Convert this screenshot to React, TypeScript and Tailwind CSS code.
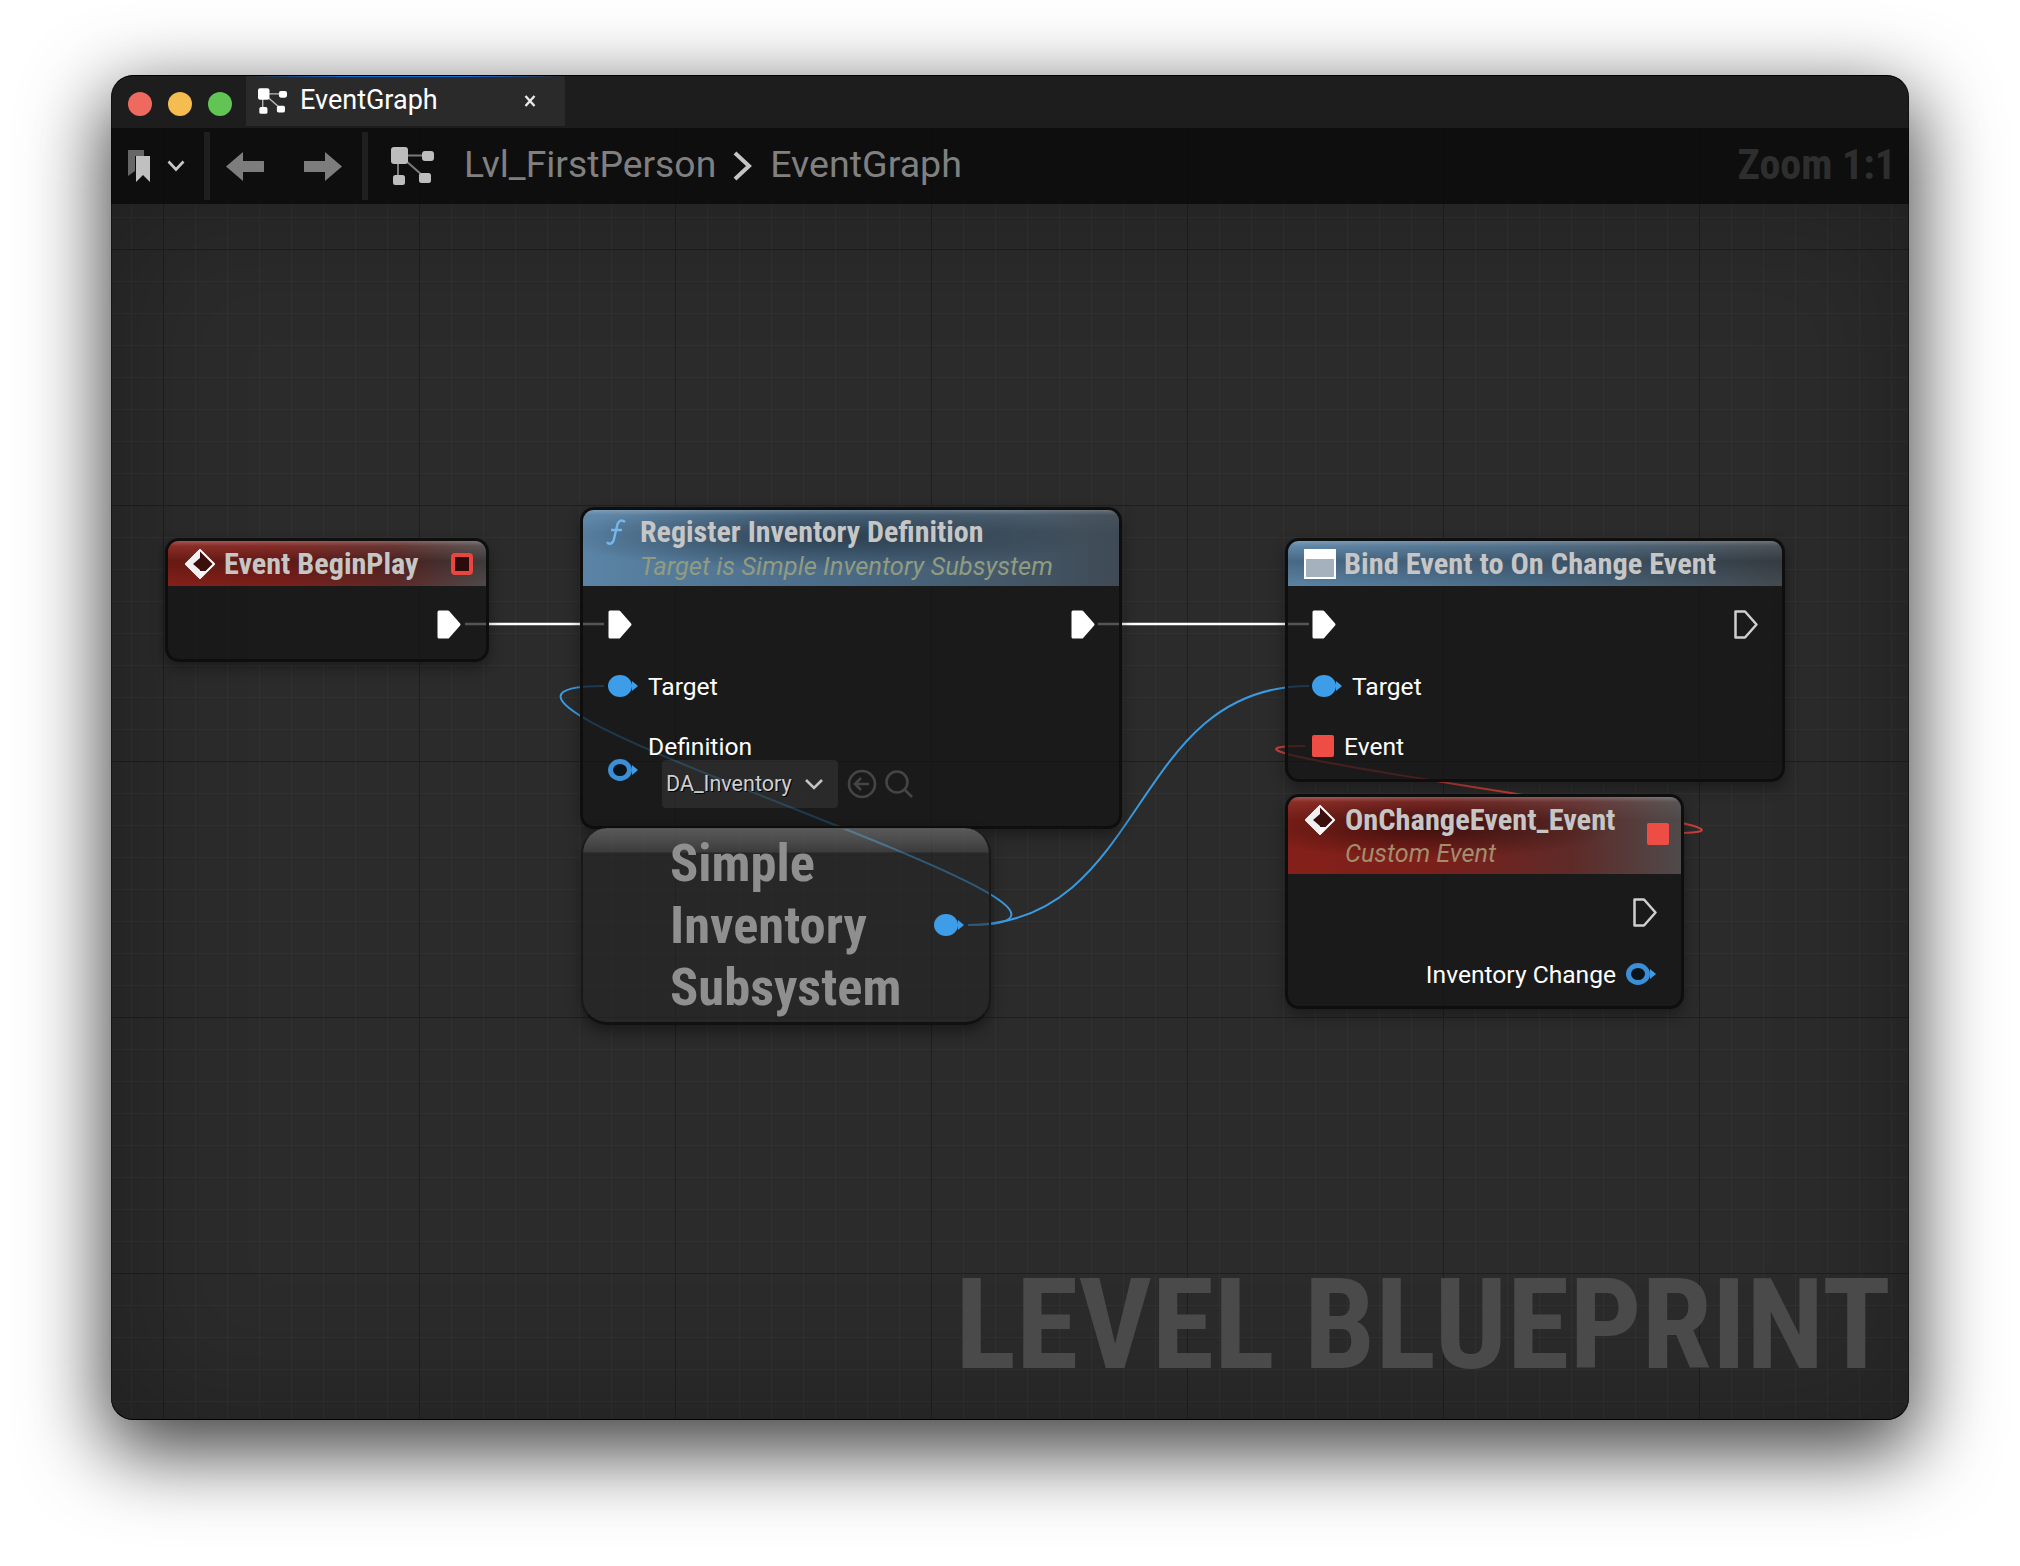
import React from "react";

const cond = "font-['Roboto_Condensed','Roboto',sans-serif] font-bold [font-stretch:75%]";

function Exec({ filled = true }: { filled?: boolean }) {
  return (
    <svg width="24" height="29" viewBox="0 0 24 29" className="shrink-0">
      <path
        d={filled ? "M2 2 H11 L22 14.5 L11 27 H2 Z" : "M1.5 1.5 H11 L22.5 14.5 L11 27.5 H1.5 Z"}
        fill={filled ? "#ffffff" : "none"}
        stroke={filled ? "#ffffff" : "#cfcfcf"}
        strokeWidth={filled ? 3 : 2.5}
        strokeLinejoin="round"
      />
    </svg>
  );
}

function DataPin({ ring = false }: { ring?: boolean }) {
  return (
    <svg width="30" height="22" viewBox="0 0 30 22" className="shrink-0">
      <path d="M24 6 L30 11 L24 16 Z" fill="#3d9de8" />
      {ring ? (
        <ellipse cx="12" cy="11" rx="9.5" ry="8.5" fill="#0c141a" stroke="#3a8fd6" strokeWidth="5" />
      ) : (
        <ellipse cx="12" cy="11" rx="12" ry="11" fill="#3d9de8" />
      )}
    </svg>
  );
}

function Diamond() {
  return (
    <svg width="30" height="30" viewBox="0 0 30 30" className="shrink-0">
      <path d="M15 1 L29 15 L15 29 L1 15 Z" fill="#3a0f0c" stroke="#ffffff" strokeWidth="2" strokeLinejoin="miter" />
      <path d="M15 1 L1 15 L15 29 L15 21 L8 15 L15 9 Z" fill="#f0f0f0" />
      <path d="M15 22 L22 22 L15 28 Z" fill="#ffffff" />
    </svg>
  );
}

function GraphIcon({ w, h, color, line }: { w: number; h: number; color: string; line: string }) {
  return (
    <svg width={w} height={h} viewBox="0 0 43 38" className="shrink-0">
      <path d="M15 8.5 H33 M7 15 V30 M14 13 L31 28" stroke={line} strokeWidth="2" fill="none" />
      <rect x="0" y="0" width="17" height="17" rx="3" fill={color} />
      <rect x="31" y="4" width="12" height="10" rx="3" fill={color} />
      <rect x="2" y="28" width="12" height="10" rx="2.5" fill={color} />
      <rect x="28" y="26" width="12" height="10" rx="2.5" fill={color} />
    </svg>
  );
}

function TrafficLight({ color }: { color: string }) {
  return <div className={color + " w-[24px] h-[24px] rounded-full"} />;
}

const shell = "absolute rounded-[14px] border-[3px] border-[#0e0e0e] bg-[rgba(20,20,20,0.72)] shadow-[0_6px_14px_rgba(0,0,0,0.35)]";
const redHead =
  "rounded-t-[11px] bg-[linear-gradient(180deg,rgba(255,255,255,0.25)_0px,rgba(255,255,255,0.06)_5px,rgba(0,0,0,0.22)_45%,rgba(0,0,0,0)_100%),linear-gradient(90deg,#842019_0%,#7c1f1a_35%,#5e2a28_72%,#4f4a4a_100%)]";
const redHeadTall =
  "rounded-t-[11px] bg-[radial-gradient(ellipse_48%_42%_at_36%_38%,rgba(0,0,0,0.5),rgba(0,0,0,0)),linear-gradient(180deg,rgba(255,255,255,0.25)_0px,rgba(255,255,255,0.06)_5px,rgba(0,0,0,0)_30%),linear-gradient(90deg,#842019_0%,#7c1f1a_35%,#5e2a28_72%,#4f4a4a_100%)]";
const blueHead =
  "rounded-t-[11px] bg-[linear-gradient(180deg,rgba(255,255,255,0.22)_0px,rgba(255,255,255,0.04)_5px,rgba(0,0,0,0.2)_45%,rgba(0,0,0,0)_100%),linear-gradient(90deg,#5a83a5_0%,#4a6a85_50%,#434a50_100%)]";
const blueHeadTall =
  "rounded-t-[11px] bg-[radial-gradient(ellipse_50%_45%_at_45%_35%,rgba(0,0,0,0.42),rgba(0,0,0,0)),linear-gradient(180deg,rgba(255,255,255,0.22)_0px,rgba(255,255,255,0.04)_5px,rgba(0,0,0,0)_30%),linear-gradient(90deg,#5a83a5_0%,#4a6a85_50%,#3f4a54_100%)]";

function Label({ children, className = "" }: { children: React.ReactNode; className?: string }) {
  return <span className={"text-[24.6px] leading-[28px] text-white whitespace-nowrap " + className}>{children}</span>;
}

export default function App() {
  return (
    <div className="w-[2020px] h-[1566px] bg-white pt-[75px] pl-[111px] font-['Roboto',sans-serif] overflow-hidden">
      <div className="w-[1798px] h-[1345px] rounded-[22px] overflow-hidden flex flex-col bg-[#1d1d1d] shadow-[0_26px_80px_6px_rgba(0,0,0,0.75)] relative">
        {/* title bar */}
        <div className="h-[53px] shrink-0 flex items-start pl-[17px]">
          <div className="flex items-center gap-[16px] mt-[17px]">
            <TrafficLight color="bg-[#ee6a5f]" />
            <TrafficLight color="bg-[#f5bd4f]" />
            <TrafficLight color="bg-[#61c454]" />
          </div>
          <div className="ml-[14px] w-[319px] h-[51px] bg-[#2a2a2a] rounded-t-[4px] flex items-center pl-[12px] relative">
            <div className="absolute left-0 right-0 top-0 h-[2px] bg-[linear-gradient(90deg,rgba(30,100,210,0),#1e66d0_30%,#1e66d0_70%,rgba(30,100,210,0))]" />
            <GraphIcon w={29} h={26} color="#ffffff" line="#bbbbbb" />
            <span className="ml-[13px] text-[27px] text-white leading-none">EventGraph</span>
            <svg width="12" height="14" viewBox="0 0 12 14" className="ml-auto mr-[29px]">
              <path d="M1.5 2 L10.5 12 M10.5 2 L1.5 12" stroke="#e8e8e8" strokeWidth="2.4" />
            </svg>
          </div>
        </div>

        {/* graph area */}
        <div className="flex-1 flex flex-col bg-[#2b2b2b] bg-[linear-gradient(#1f1f1f_1px,transparent_1px),linear-gradient(90deg,#1f1f1f_1px,transparent_1px),linear-gradient(#313131_1px,transparent_1px),linear-gradient(90deg,#313131_1px,transparent_1px)] bg-[size:256px_256px,256px_256px,32px_32px,32px_32px] bg-[position:0_121px,52px_0,0_25px,20px_0]">
          {/* toolbar */}
          <div className="h-[76px] shrink-0 bg-[rgba(8,8,8,0.8)] flex items-center pl-[17px] relative">
            <svg width="22" height="32" viewBox="0 0 22 32" className="shrink-0">
              <path d="M0 0 H16 V6 H7 V21 L0 26 Z" fill="#666666" />
              <path d="M8 6 H22 V32 L15 25 L8 32 Z" fill="#c0c0c0" />
            </svg>
            <svg width="18" height="12" viewBox="0 0 18 12" className="ml-[17px] shrink-0">
              <path d="M1.5 1.5 L9 9.5 L16.5 1.5" stroke="#c8c8c8" strokeWidth="2.6" fill="none" />
            </svg>
            <div className="ml-[19px] w-[6px] h-[68px] bg-[#1f1f1f]" />
            <svg width="38" height="29" viewBox="0 0 38 29" className="ml-[16px] shrink-0">
              <path d="M0 14.5 L17 0 V9 H38 V20 H17 V29 Z" fill="#7d7d7d" />
            </svg>
            <svg width="38" height="29" viewBox="0 0 38 29" className="ml-[40px] shrink-0">
              <path d="M38 14.5 L21 0 V9 H0 V20 H21 V29 Z" fill="#7d7d7d" />
            </svg>
            <div className="ml-[20px] w-[6px] h-[68px] bg-[#1f1f1f]" />
            <div className="ml-[23px]">
              <GraphIcon w={43} h={38} color="#bdbdbd" line="#7a7a7a" />
            </div>
            <span className="ml-[30px] -mt-[3px] text-[37.3px] text-[#808080] leading-none">Lvl_FirstPerson</span>
            <svg width="20" height="30" viewBox="0 0 20 30" className="ml-[16px] shrink-0">
              <path d="M3 2 L17 15 L3 28" stroke="#c4c4c4" strokeWidth="4" fill="none" />
            </svg>
            <span className="ml-[18px] -mt-[3px] text-[37.6px] text-[#808080] leading-none">EventGraph</span>
            <span className={cond + " ml-auto mr-[13px] -mt-[3px] text-[42px] leading-none text-[#2e2e2e]"}>Zoom 1:1</span>
          </div>

          {/* canvas */}
          <div className="flex-1 relative shadow-[inset_0_0_130px_rgba(0,0,0,0.28)]">
            <svg width="1798" height="1216" viewBox="111 204 1798 1216" className="absolute left-0 top-0" fill="none">
              <path d="M465 624 H604" stroke="#ffffff" strokeWidth="2.5" />
              <path d="M1098 624 H1309" stroke="#ffffff" strokeWidth="2.5" />
              <path d="M968 925 C1208 925 364 686 604 686" stroke="#3a9be0" strokeWidth="2" />
              <path d="M968 925 C1148 925 1129 686 1309 686" stroke="#3a9be0" strokeWidth="2" />
              <path d="M1673 833 C1853 833 1125 746 1305 746" stroke="#c8403a" strokeWidth="2" />
            </svg>

            {/* Event BeginPlay */}
            <div className={shell + " left-[54px] top-[334px] w-[324px] h-[124px]"}>
              <div className={redHead + " h-[45px] flex items-center pl-[17px] pr-[13px]"}>
                <Diamond />
                <span className={cond + " ml-[9px] mt-[2px] text-[30.2px] leading-none text-[#c6c6c6]"}>Event BeginPlay</span>
                <div className="ml-auto w-[22px] h-[22px] rounded-[4px] border-[4px] border-[#e8463f] bg-[#2b0b0b]" />
              </div>
              <div className="h-[76px] flex items-center justify-end pr-[25px]">
                <Exec />
              </div>
            </div>

            {/* Register Inventory Definition */}
            <div className={shell + " left-[469px] top-[303px] w-[542px] h-[322px]"}>
              <div className={blueHeadTall + " h-[76px] pl-[23px]"}>
                <div className="flex items-center h-[44px]">
                  <svg width="20" height="26" viewBox="0 0 20 26" className="shrink-0">
                    <path d="M19 3 C15 0 12 2 11 7 L8 20 C7 25 3 26 1 23 M5 11 H16" stroke="#74b6ee" strokeWidth="2.4" fill="none" />
                  </svg>
                  <span className={cond + " ml-[14px] text-[30px] leading-none text-[#c6c6c6]"}>Register Inventory Definition</span>
                </div>
                <div className="ml-[34px] text-[25.5px] leading-[24px] italic text-[#919b80] whitespace-nowrap">Target is Simple Inventory Subsystem</div>
              </div>
              <div className="h-[76px] flex items-center justify-between pl-[25px] pr-[24px]">
                <Exec />
                <Exec />
              </div>
              <div className="h-[48px] flex items-center pl-[25px]">
                <DataPin />
                <Label className="ml-[10px] mt-[2px]">Target</Label>
              </div>
              <div className="flex items-start pl-[25px] pt-[22px]">
                <div className="mt-[27px]">
                  <DataPin ring />
                </div>
                <div className="ml-[10px] flex flex-col">
                  <Label className="mt-[1px]">Definition</Label>
                  <div className="ml-[14px] -mt-[1px] flex items-center">
                    <div className="w-[176px] h-[48px] rounded-[4px] bg-[rgba(255,255,255,0.07)] flex items-center pl-[4px]">
                      <span className="text-[21.5px] text-[#cfcfcf] [text-shadow:1px_1px_0_#000]">DA_Inventory</span>
                      <svg width="20" height="12" viewBox="0 0 20 12" className="ml-[12px]">
                        <path d="M2 2 L10 10 L18 2" stroke="#c4c4c4" strokeWidth="2.6" fill="none" />
                      </svg>
                    </div>
                    <svg width="30" height="30" viewBox="0 0 30 30" className="ml-[9px]" fill="none" stroke="#454545" strokeWidth="2.6">
                      <circle cx="15" cy="15" r="13" />
                      <path d="M22 15 H9 M14 9 L8 15 L14 21" />
                    </svg>
                    <svg width="30" height="30" viewBox="0 0 30 30" className="ml-[7px]" fill="none" stroke="#454545" strokeWidth="2.6">
                      <circle cx="13" cy="13" r="10.5" />
                      <path d="M20.5 20.5 L28 28" />
                    </svg>
                  </div>
                </div>
              </div>
            </div>

            {/* Simple Inventory Subsystem */}
            <div className="absolute left-[470px] top-[624px] w-[410px] h-[197px] rounded-[26px] bg-[linear-gradient(180deg,rgba(130,130,130,0.6)_0px,rgba(70,70,70,0.6)_24px,rgba(36,36,36,0.55)_25px)] border-b-[3px] border-x-[2px] border-x-[#181818] border-b-[#111111] shadow-[0_6px_14px_rgba(0,0,0,0.4)] flex items-center justify-between pl-[87px] pr-[25px]">
              <div className={cond + " text-[52.5px] leading-[62px] text-[#8f8f8f]"}>
                <div>Simple</div>
                <div>Inventory</div>
                <div>Subsystem</div>
              </div>
              <DataPin />
            </div>

            {/* Bind Event */}
            <div className={shell + " left-[1174px] top-[334px] w-[500px] h-[244px]"}>
              <div className={blueHead + " h-[45px] flex items-center pl-[16px]"}>
                <div className="w-[32px] h-[30px] border-[2px] border-white border-t-[10px] bg-[#a5b1bd] shrink-0" />
                <span className={cond + " ml-[8px] mt-[2px] text-[30.4px] leading-none text-[#c6c6c6]"}>Bind Event to On Change Event</span>
              </div>
              <div className="h-[76px] flex items-center justify-between px-[24px]">
                <Exec />
                <Exec filled={false} />
              </div>
              <div className="h-[48px] flex items-center pl-[24px]">
                <DataPin />
                <Label className="ml-[10px] mt-[2px]">Target</Label>
              </div>
              <div className="h-[72px] flex items-center pl-[24px]">
                <div className="w-[22px] h-[22px] rounded-[2px] bg-[#ee4d45]" />
                <Label className="ml-[10px] mt-[2px]">Event</Label>
              </div>
            </div>

            {/* OnChangeEvent */}
            <div className={shell + " left-[1174px] top-[590px] w-[399px] h-[215px]"}>
              <div className={redHeadTall + " h-[77px] flex justify-between items-start"}>
                <div className="pl-[17px]">
                  <div className="flex items-center h-[46px]">
                    <Diamond />
                    <span className={cond + " ml-[10px] text-[30.4px] leading-none text-[#c6c6c6]"}>OnChangeEvent_Event</span>
                  </div>
                  <div className="ml-[40px] -mt-[1px] text-[25.2px] leading-[24px] italic text-[#a58c6c]">Custom Event</div>
                </div>
                <div className="mt-[26px] mr-[12px] w-[22px] h-[22px] rounded-[2px] bg-[#ee4d45]" />
              </div>
              <div className="h-[76px] flex items-center justify-end pr-[24px]">
                <Exec filled={false} />
              </div>
              <div className="h-[48px] flex items-center justify-end pr-[25px]">
                <Label className="mr-[10px] mt-[2px]">Inventory Change</Label>
                <DataPin ring />
              </div>
            </div>

            <div className={cond + " absolute right-[18px] bottom-[32px] text-[127px] leading-none text-[#4a4a4a] whitespace-nowrap"}>LEVEL BLUEPRINT</div>
          </div>
        </div>
        <div className="absolute inset-0 rounded-[22px] border-y border-y-black border-x border-x-[rgba(0,0,0,0.4)] pointer-events-none" />
      </div>
    </div>
  );
}
